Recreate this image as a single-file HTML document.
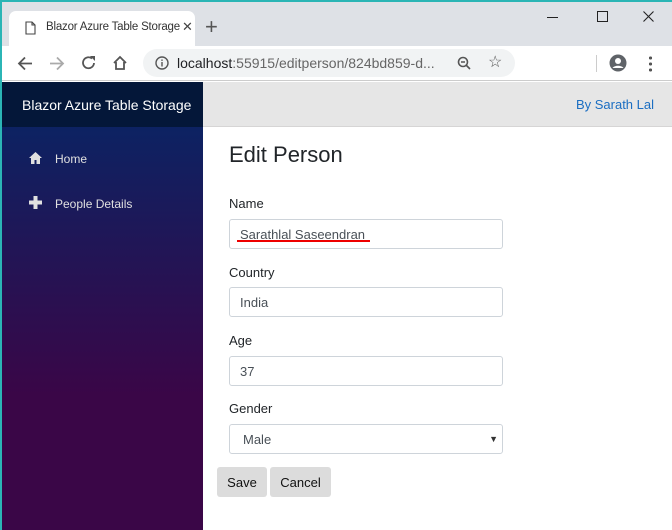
<!DOCTYPE html>
<html><head><meta charset="utf-8"><style>
*{box-sizing:border-box;margin:0;padding:0}
body{width:672px;height:530px;overflow:hidden;font-family:"Liberation Sans",Arial,sans-serif;background:#fff;position:relative}
.frame{position:absolute;left:0;top:0;width:672px;height:530px;border-left:2px solid #2bb5b5;border-top:2px solid #2bb5b5;pointer-events:none}
.tabbar{position:absolute;left:0;top:0;width:672px;height:46px;background:#dee1e6}
.tab{position:absolute;left:9px;top:11px;width:186px;height:35px;background:#fff;border-radius:7px 7px 0 0;font-size:11.5px;color:#333;letter-spacing:-0.2px}
.tab .t{position:absolute;left:37px;top:10px}
.tab .x{position:absolute;left:173px;top:8px;font-size:13px;color:#444}
.plus{position:absolute;left:205px;top:14px;font-size:22px;color:#555}
.toolbar{position:absolute;left:0;top:46px;width:672px;height:35px;background:#fff;border-bottom:1px solid #ccc}
.omni{position:absolute;left:143px;top:3px;width:372px;height:28px;background:#f1f3f4;border-radius:14px;font-size:14px;color:#202124}
.omni .u{position:absolute;left:34px;top:6px}
.ic{position:absolute;color:#555;font-size:17px}
.side{position:absolute;left:0;top:82px;width:203px;height:448px;background:linear-gradient(180deg,#052767 0%,#3a0647 70%)}
.brand{position:absolute;left:0;top:82px;width:203px;height:45px;background:#041739;color:#fff;font-size:14px;padding:15px 0 0 22px}
.nav{position:absolute;left:29px;color:#e0e0e0;font-size:12px}
.top{position:absolute;left:203px;top:82px;width:469px;height:45px;background:#e6e6e6;border-bottom:1px solid #d6d5d5}
.top a{position:absolute;right:18px;top:15px;color:#1b6ec2;font-size:13px}
h1{position:absolute;left:229px;top:142px;font-size:22px;font-weight:400;color:#212529}
.lb{position:absolute;left:229px;font-size:13px;color:#212529}
.in{position:absolute;left:229px;width:274px;height:30px;border:1px solid #ced4da;border-radius:3px;font-size:13px;color:#495057;padding:7px 0 0 10px}
.btn{position:absolute;top:467px;height:30px;background:#dcdcdc;border-radius:3px;font-size:13px;color:#111;padding:8px 0 0 0;text-align:center}
</style></head><body>
<div class="tabbar">
 <div class="tab"><svg style="position:absolute;left:16px;top:10px" width="11" height="14" viewBox="0 0 11 14"><path d="M1 1h6l3 3v9H1z M7 1v3h3" fill="none" stroke="#444" stroke-width="1.1"/></svg><span class="t">Blazor Azure Table Storage</span><span class="x">✕</span></div>
 <div class="plus">+</div>
 <div style="position:absolute;left:547px;top:17px;width:11px;height:1px;background:#222"></div>
 <svg style="position:absolute;left:597px;top:11px" width="11" height="11"><rect x="0.5" y="0.5" width="10" height="10" fill="none" stroke="#222"/></svg>
 <svg style="position:absolute;left:643px;top:11px" width="11" height="11"><path d="M0.5 0.5L10.5 10.5M10.5 0.5L0.5 10.5" stroke="#222" stroke-width="1.1"/></svg>
</div>
<div class="toolbar">
 <svg style="position:absolute;left:17px;top:10px" width="16" height="15"><path d="M15 7.5H2M8 1.5L2 7.5l6 6" fill="none" stroke="#555" stroke-width="1.8"/></svg>
 <svg style="position:absolute;left:49px;top:10px" width="16" height="15"><path d="M1 7.5h13M8 1.5l6 6-6 6" fill="none" stroke="#aaa" stroke-width="1.8"/></svg>
 <svg style="position:absolute;left:81px;top:9px" width="16" height="16"><path d="M13 8A5.5 5.5 0 1 1 11 3.5" fill="none" stroke="#555" stroke-width="1.8"/><path d="M9 1h5v5z" fill="#555"/></svg>
 <svg style="position:absolute;left:112px;top:9px" width="16" height="16" viewBox="0 0 16 16"><path d="M2 8L8 2l6 6M4 7v7h8V7" fill="none" stroke="#555" stroke-width="1.8"/></svg>
 <div class="omni">
  <svg style="position:absolute;left:12px;top:7px" width="14" height="14"><circle cx="7" cy="7" r="6" fill="none" stroke="#555" stroke-width="1.4"/><rect x="6.3" y="6" width="1.4" height="4.5" fill="#555"/><rect x="6.3" y="3.5" width="1.4" height="1.4" fill="#555"/></svg>
  <span class="u">localhost<span style="color:#666">:55915/editperson/824bd859-d...</span></span>
  <svg style="position:absolute;left:314px;top:7px" width="15" height="15"><circle cx="6" cy="6" r="4.5" fill="none" stroke="#555" stroke-width="1.6"/><path d="M9.5 9.5L13 13M4 6h4" stroke="#555" stroke-width="1.6"/></svg>
  <div style="position:absolute;left:345px;top:3px;font-size:16px;color:#555">☆</div>
 </div>
 <div style="position:absolute;left:596px;top:9px;width:1px;height:17px;background:#ccc"></div>
 <svg style="position:absolute;left:609px;top:8px" width="18" height="18"><circle cx="9" cy="9" r="8.5" fill="#5f6368"/><circle cx="9" cy="7" r="3" fill="#fff"/><path d="M3.5 14c2-3 9-3 11 0" fill="#fff"/></svg>
 <div style="position:absolute;left:649px;top:9px;width:3px;height:17px;background:radial-gradient(circle,#555 1.5px,transparent 1.6px) 0 0/3px 6px"></div>
</div>
<div class="side"></div>
<div class="brand">Blazor Azure Table Storage</div>
<svg style="position:absolute;left:29px;top:152px" width="13" height="12" viewBox="0 0 13 12"><path d="M6.5 0L0 6h2v6h3.5V8h2v4H11V6h2z" fill="#e0e0e0"/></svg>
<div class="nav" style="left:55px;top:152px">Home</div>
<svg style="position:absolute;left:29px;top:196px" width="13" height="13"><path d="M4.5 0h4v4.5H13v4H8.5V13h-4V8.5H0v-4h4.5z" fill="#e0e0e0"/></svg>
<div class="nav" style="left:55px;top:197px">People Details</div>
<div class="top"><a>By Sarath Lal</a></div>
<h1>Edit Person</h1>
<div class="lb" style="top:196px">Name</div>
<div class="in" style="top:219px">Sarathlal Saseendran</div>
<div style="position:absolute;left:237px;top:240px;width:133px;height:2px;background:#e00"></div>
<div class="lb" style="top:265px">Country</div>
<div class="in" style="top:287px">India</div>
<div class="lb" style="top:333px">Age</div>
<div class="in" style="top:356px">37</div>
<div class="lb" style="top:401px">Gender</div>
<div class="in" style="top:424px;padding-left:13px">Male<span style="position:absolute;right:4px;top:9px;font-size:9px;color:#333">▼</span></div>
<div class="btn" style="left:217px;width:50px">Save</div>
<div class="btn" style="left:270px;width:61px">Cancel</div>
<div class="frame"></div>
</body></html>
